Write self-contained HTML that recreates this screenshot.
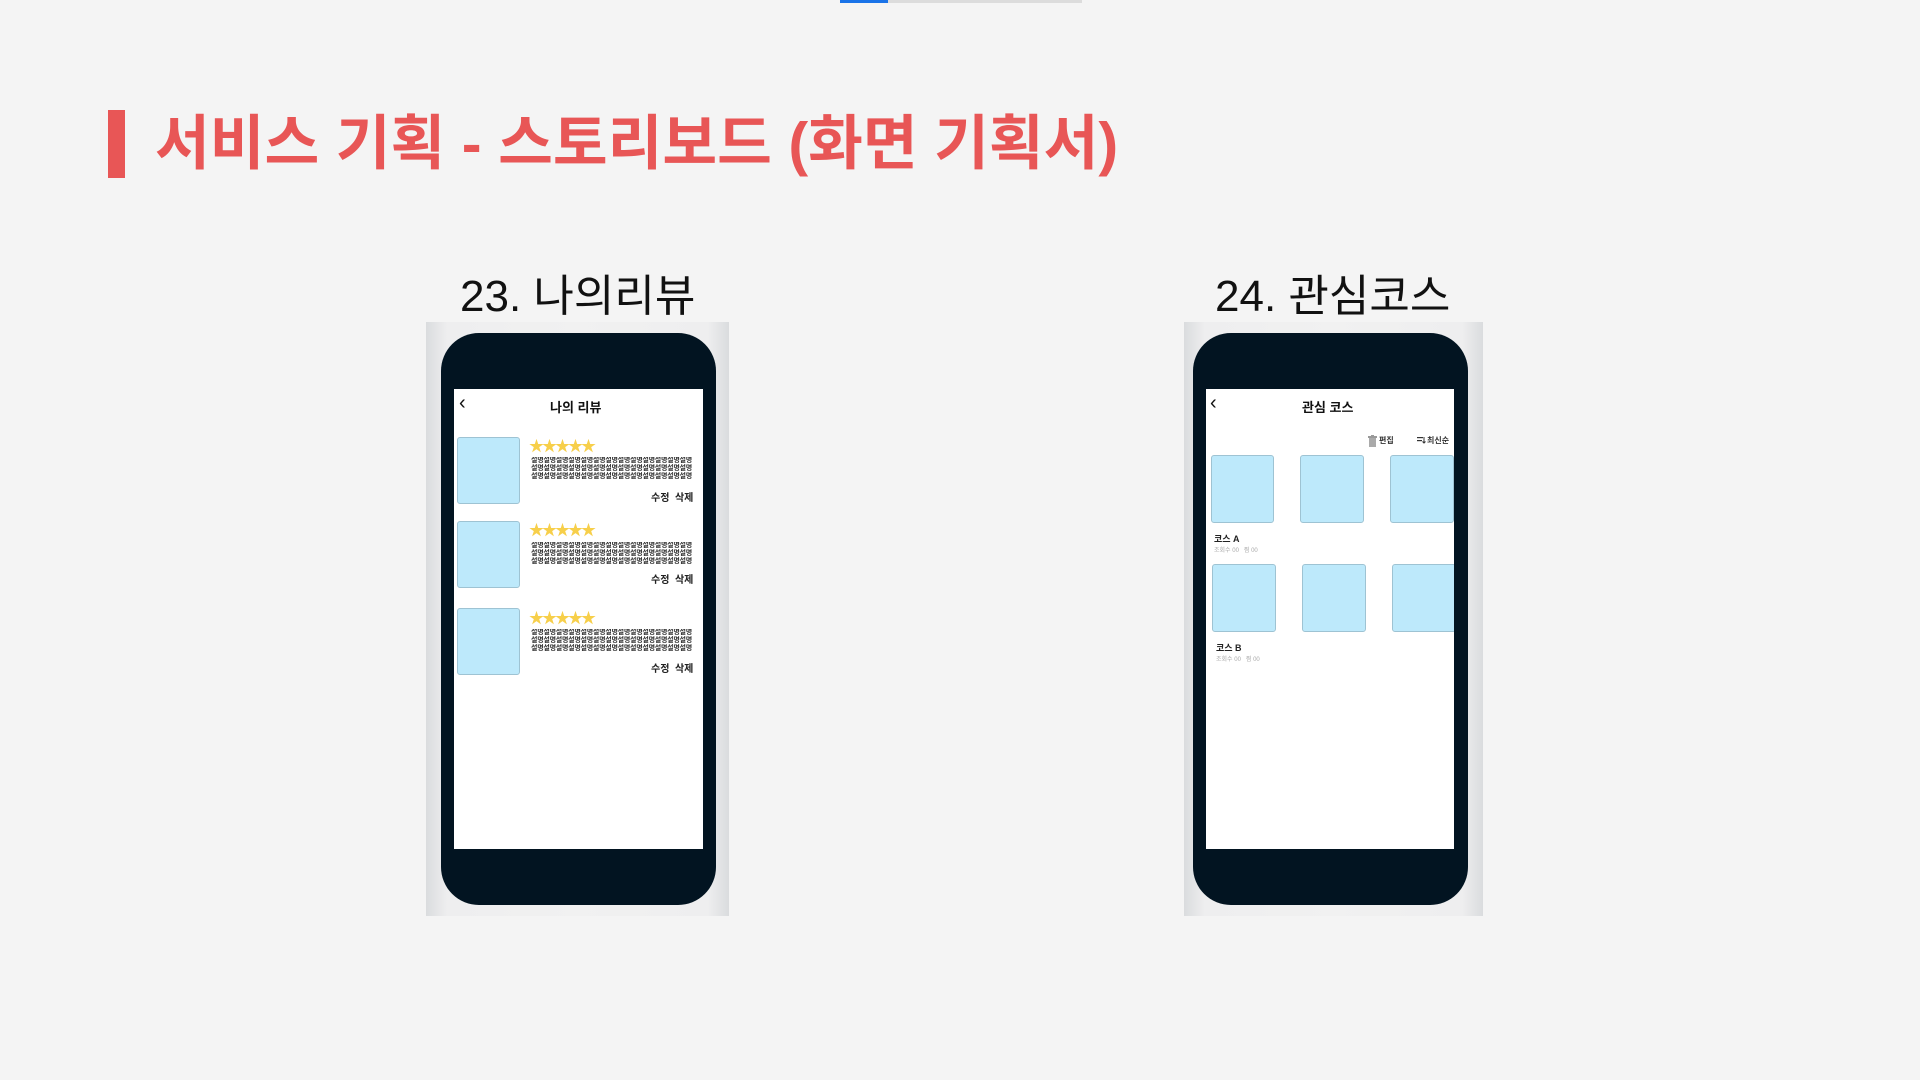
<!DOCTYPE html>
<html><head><meta charset="utf-8">
<style>
*{margin:0;padding:0;box-sizing:border-box}
body{width:1920px;height:1080px;background:#f4f4f4;position:relative;overflow:hidden;font-family:"Liberation Sans","Noto Sans CJK KR",sans-serif}
.a{position:absolute}
.shadow{background:linear-gradient(90deg,#dadcde,#eeeeef 7%,#f1f1f1 50%,#eeeeef 93%,#dadcde);}
.phone{background:#021421;border-radius:38px}
.screen{background:#fff;overflow:hidden}
.thumb{background:#bde9fb;border:1px solid #9ec3d3;border-radius:3px}
.stars{color:#f7cf4a;font-size:15px;letter-spacing:-2px;line-height:12px}
.desc{font-size:7px;line-height:8px;color:#333;font-weight:bold;white-space:nowrap;overflow:hidden;width:168px;letter-spacing:-0.25px}
.btns{font-size:10px;color:#222;font-weight:bold}
.ttl{font-size:13px;font-weight:bold;color:#111}
.lbl{font-size:44px;color:#111;white-space:nowrap}
.back{font-size:20px;color:#111;line-height:20px}
</style></head><body>
<div class="a" style="left:840px;top:0;width:48px;height:3px;background:#1a73e8"></div>
<div class="a" style="left:888px;top:0;width:194px;height:3px;background:#dcdcdc"></div>
<div class="a" style="left:108px;top:110px;width:17px;height:68px;background:#e85656"></div>
<div class="a" style="left:155px;top:106px;font-size:59.5px;font-weight:bold;color:#e85656;white-space:nowrap;line-height:76px">서비스 기획 - 스토리보드 (화면 기획서)</div>

<div class="a lbl" style="left:460px;top:260px">23. 나의리뷰</div>
<div class="a lbl" style="left:1215px;top:260px">24. 관심코스</div>

<!-- phone 1 -->
<div class="a shadow" style="left:426px;top:322px;width:303px;height:594px"></div>
<div class="a phone" style="left:441px;top:333px;width:275px;height:572px"></div>
<div class="a screen" style="left:454px;top:389px;width:249px;height:460px">
  <div class="a back" style="left:5px;top:4px">‹</div>
  <div class="a ttl" style="left:96px;top:8px">나의 리뷰</div>
  <div class="a thumb" style="left:3px;top:48px;width:63px;height:67px"></div>
  <div class="a stars" style="left:75px;top:52px">★★★★★</div>
  <div class="a desc" style="left:77px;top:68px">설명설명설명설명설명설명설명설명설명설명설명설명설명<br>설명설명설명설명설명설명설명설명설명설명설명설명설명<br>설명설명설명설명설명설명설명설명설명설명설명설명설명</div>
  <div class="a btns" style="left:197px;top:100px">수정&nbsp; 삭제</div>
  <div class="a thumb" style="left:3px;top:132px;width:63px;height:67px"></div>
  <div class="a stars" style="left:75px;top:136px">★★★★★</div>
  <div class="a desc" style="left:77px;top:153px">설명설명설명설명설명설명설명설명설명설명설명설명설명<br>설명설명설명설명설명설명설명설명설명설명설명설명설명<br>설명설명설명설명설명설명설명설명설명설명설명설명설명</div>
  <div class="a btns" style="left:197px;top:182px">수정&nbsp; 삭제</div>
  <div class="a thumb" style="left:3px;top:219px;width:63px;height:67px"></div>
  <div class="a stars" style="left:75px;top:224px">★★★★★</div>
  <div class="a desc" style="left:77px;top:240px">설명설명설명설명설명설명설명설명설명설명설명설명설명<br>설명설명설명설명설명설명설명설명설명설명설명설명설명<br>설명설명설명설명설명설명설명설명설명설명설명설명설명</div>
  <div class="a btns" style="left:197px;top:271px">수정&nbsp; 삭제</div>
</div>

<!-- phone 2 -->
<div class="a shadow" style="left:1184px;top:322px;width:299px;height:594px"></div>
<div class="a phone" style="left:1193px;top:333px;width:275px;height:572px"></div>
<div class="a screen" style="left:1206px;top:389px;width:248px;height:460px">
  <div class="a back" style="left:4px;top:4px">‹</div>
  <div class="a ttl" style="left:96px;top:8px">관심 코스</div>
  <svg class="a" style="left:162px;top:46px" width="9" height="12" viewBox="0 0 9 12"><rect x="0" y="1" width="9" height="2" fill="#999"/><rect x="1" y="3" width="7" height="9" fill="#aaa"/><rect x="3" y="0" width="3" height="1" fill="#999"/></svg>
  <div class="a" style="left:173px;top:46px;font-size:8px;color:#333;font-weight:bold">편집</div>
  <svg class="a" style="left:211px;top:47px" width="9" height="8" viewBox="0 0 9 8"><rect x="0" y="1" width="6" height="1.2" fill="#333"/><rect x="0" y="4" width="5" height="1.2" fill="#333"/><path d="M7 1v6M5.5 5.5L7 7l1.5-1.5" stroke="#333" fill="none"/></svg>
  <div class="a" style="left:221px;top:46px;font-size:8px;color:#333;font-weight:bold">최신순</div>
  <div class="a thumb" style="left:5px;top:66px;width:63px;height:68px"></div>
  <div class="a thumb" style="left:94px;top:66px;width:64px;height:68px"></div>
  <div class="a thumb" style="left:184px;top:66px;width:64px;height:68px"></div>
  <div class="a" style="left:8px;top:143px;font-size:9px;font-weight:bold;color:#222">코스 A</div>
  <div class="a" style="left:8px;top:156px;font-size:6px;color:#aaa">조회수 00 &nbsp; 찜 00</div>
  <div class="a thumb" style="left:6px;top:175px;width:64px;height:68px"></div>
  <div class="a thumb" style="left:96px;top:175px;width:64px;height:68px"></div>
  <div class="a thumb" style="left:186px;top:175px;width:64px;height:68px"></div>
  <div class="a" style="left:10px;top:252px;font-size:9px;font-weight:bold;color:#222">코스 B</div>
  <div class="a" style="left:10px;top:265px;font-size:6px;color:#aaa">조회수 00 &nbsp; 찜 00</div>
</div>
</body></html>
